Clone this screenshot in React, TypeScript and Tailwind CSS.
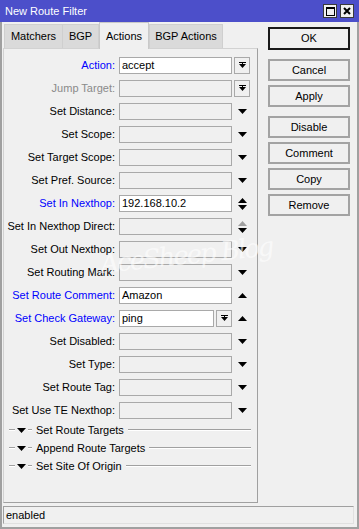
import React from "react";

type Ctl = "box" | "down" | "up" | "updown" | "updownDim";

interface Field {
	label: string;
	tone?: "blue" | "gray";
	value?: string;
	ctl: Ctl;
	inlineBox?: boolean;
}

const fields: Field[] = [
	{ label: "Action:", tone: "blue", value: "accept", ctl: "box" },
	{ label: "Jump Target:", tone: "gray", ctl: "box" },
	{ label: "Set Distance:", ctl: "down" },
	{ label: "Set Scope:", ctl: "down" },
	{ label: "Set Target Scope:", ctl: "down" },
	{ label: "Set Pref. Source:", ctl: "down" },
	{ label: "Set In Nexthop:", tone: "blue", value: "192.168.10.2", ctl: "updown" },
	{ label: "Set In Nexthop Direct:", ctl: "updownDim" },
	{ label: "Set Out Nexthop:", ctl: "down" },
	{ label: "Set Routing Mark:", ctl: "down" },
	{ label: "Set Route Comment:", tone: "blue", value: "Amazon", ctl: "up" },
	{ label: "Set Check Gateway:", tone: "blue", value: "ping", ctl: "up", inlineBox: true },
	{ label: "Set Disabled:", ctl: "down" },
	{ label: "Set Type:", ctl: "down" },
	{ label: "Set Route Tag:", ctl: "down" },
	{ label: "Set Use TE Nexthop:", ctl: "down" },
];

const sections = ["Set Route Targets", "Append Route Targets", "Set Site Of Origin"];

const DownTri = ({ color = "#000" }: { color?: string }) => (
	<svg width="9" height="5" viewBox="0 0 9 5">
		<polygon points="0,0 9,0 4.5,5" fill={color} />
	</svg>
);

const UpTri = ({ color = "#000" }: { color?: string }) => (
	<svg width="9" height="5" viewBox="0 0 9 5">
		<polygon points="0,5 9,5 4.5,0" fill={color} />
	</svg>
);

// small box with "bar + down arrow" glyph
const DropBox = () => (
	<div className="flex h-[17px] w-[16px] items-center justify-center border border-[#a9a9a9] bg-[#f0f0f0]">
		<svg width="7" height="7" viewBox="0 0 7 7">
			<rect x="0" y="0" width="7" height="1" fill="#000" />
			<polygon points="0,2 7,2 3.5,6" fill="#000" />
			<rect x="3" y="1" width="1" height="2" fill="#000" />
		</svg>
	</div>
);

const Control: React.FC<{ ctl: Ctl }> = ({ ctl }) => {
	if (ctl === "box") return <DropBox />;
	if (ctl === "down")
		return (
			<div className="flex w-[16px] justify-center">
				<DownTri />
			</div>
		);
	if (ctl === "up")
		return (
			<div className="flex w-[16px] justify-center">
				<UpTri />
			</div>
		);
	return (
		<div className="flex w-[16px] flex-col items-center gap-[2px]">
			<UpTri color={ctl === "updownDim" ? "#a0a0a0" : "#000"} />
			<DownTri />
		</div>
	);
};

const FieldRow: React.FC<{ f: Field }> = ({ f }) => {
	const tone = f.tone === "blue" ? "text-[#0000ff]" : f.tone === "gray" ? "text-[#8a8a8a]" : "text-black";
	const input = f.value ? "bg-white" : "bg-[#f0f0f0]";
	return (
		<div className="flex h-[17px] items-center">
			<span className={`w-[111px] whitespace-nowrap text-right ${tone}`}>{f.label}</span>
			<div className="ml-[4px] flex w-[113px] items-center gap-[2px]">
				<div className={`flex h-[17px] flex-1 items-center border border-[#a9a9a9] px-[2px] ${input}`}>
					{f.value}
				</div>
				{f.inlineBox && <DropBox />}
			</div>
			<div className="ml-[2px]">
				<Control ctl={f.ctl} />
			</div>
		</div>
	);
};

const SectionRow: React.FC<{ title: string }> = ({ title }) => (
	<div className="flex h-[18px] items-center">
		<div className="ml-[5px] h-[2px] w-[6px] border-t border-b border-t-[#a0a0a0] border-b-white" />
		<div className="mx-[2px]">
			<svg width="9" height="5" viewBox="0 0 9 5">
				<polygon points="0,0 9,0 4.5,5" fill="#000" />
			</svg>
		</div>
		<div className="h-[2px] w-[4px] border-t border-b border-t-[#a0a0a0] border-b-white" />
		<span className="ml-[4px] mr-[4px] whitespace-nowrap">{title}</span>
		<div className="mr-[6px] h-[2px] flex-1 border-t border-b border-t-[#a0a0a0] border-b-white" />
	</div>
);

const tabs = ["Matchers", "BGP", "Actions", "BGP Actions"];
const buttons = [["OK"], ["Cancel", "Apply"], ["Disable", "Comment", "Copy", "Remove"]];

export default function App() {
	return (
		<div
			className="relative flex h-[529px] w-[359px] flex-col overflow-hidden bg-[#f0f0f0] text-[11px] text-black"
			style={{ fontFamily: '"Liberation Sans", Arial, sans-serif' }}
		>
			{/* title bar */}
			<div className="flex h-[22px] shrink-0 items-center justify-between bg-[#4c4fca] pl-[5px] pr-[5px]">
				<span className="text-white">New Route Filter</span>
				<div className="flex gap-[3px]">
					<div className="flex h-[14px] w-[14px] items-center justify-center border border-[#3a3a3a] bg-[#f0f0f0]">
						<div className="h-[9px] w-[9px] border border-t-2 border-black" />
					</div>
					<div className="flex h-[14px] w-[14px] items-center justify-center border border-[#3a3a3a] bg-[#f0f0f0]">
						<svg width="8" height="8" viewBox="0 0 8 8">
							<path d="M1 1 L7 7 M7 1 L1 7" stroke="#000" strokeWidth="2" />
						</svg>
					</div>
				</div>
			</div>

			{/* body */}
			<div className="flex flex-1 flex-col border-x-2 border-b-2 border-[#a0a0a0]">
				<div className="flex flex-1">
					{/* left: tabs + panel */}
					<div className="ml-[1px] flex w-[255px] flex-col">
						<div className="flex h-[26px] items-end pl-[1px]">
							{tabs.map((t) =>
								t === "Actions" ? (
									<div
										key={t}
										className="relative z-10 -mb-[1px] flex h-[27px] w-[50px] items-center justify-center border border-b-0 border-[#c9c9c9] bg-[#f0f0f0]"
									>
										{t}
									</div>
								) : (
									<div
										key={t}
										className={`flex h-[24px] items-center justify-center border border-b-0 border-[#cfcfcf] bg-[#dadada] ${
											t === "Matchers" ? "w-[59px]" : t === "BGP" ? "ml-[-1px] w-[37px]" : "w-[74px]"
										}`}
									>
										{t}
									</div>
								)
							)}
						</div>
						<div className="flex flex-col border border-[#d2d2d2] border-r-[#a0a0a0] border-b-[#a0a0a0] pt-[8px]" style={{ height: 455 }}>
							<div className="flex flex-col gap-[6px]">
								{fields.map((f) => (
									<FieldRow key={f.label} f={f} />
								))}
							</div>
							<div className="mt-[2px] flex flex-col">
								{sections.map((s) => (
									<SectionRow key={s} title={s} />
								))}
							</div>
						</div>
					</div>

					{/* right: buttons */}
					<div className="ml-[10px] mt-[5px] flex w-[82px] flex-col gap-[9px]">
						{buttons.map((group, gi) => (
							<div key={gi} className="flex flex-col gap-[4px]">
								{group.map((b) => (
									<div
										key={b}
										className={`flex h-[22px] items-center justify-center bg-[#f0f0f0] ${
											b === "OK" ? "h-[23px] border-2 border-[#1a1a1a]" : "border-2 border-[#a3a3a3]"
										}`}
									>
										{b}
									</div>
								))}
							</div>
						))}
					</div>
				</div>

				{/* status bar */}
				<div className="mb-[3px] ml-[1px] mr-[3px] mt-[3px] flex h-[18px] items-center border border-[#a0a0a0] border-r-[#e0e0e0] border-b-[#e0e0e0] pl-[2px]">
					enabled
				</div>
			</div>

			{/* watermark */}
			<div
				className="pointer-events-none absolute left-[100px] top-[236px] -rotate-6 whitespace-nowrap text-[26px] italic tracking-[-2px] text-white/60"
				style={{ fontFamily: '"DejaVu Serif", serif', fontWeight: 300 }}
			>
				AceSheep Blog
			</div>
		</div>
	);
}
